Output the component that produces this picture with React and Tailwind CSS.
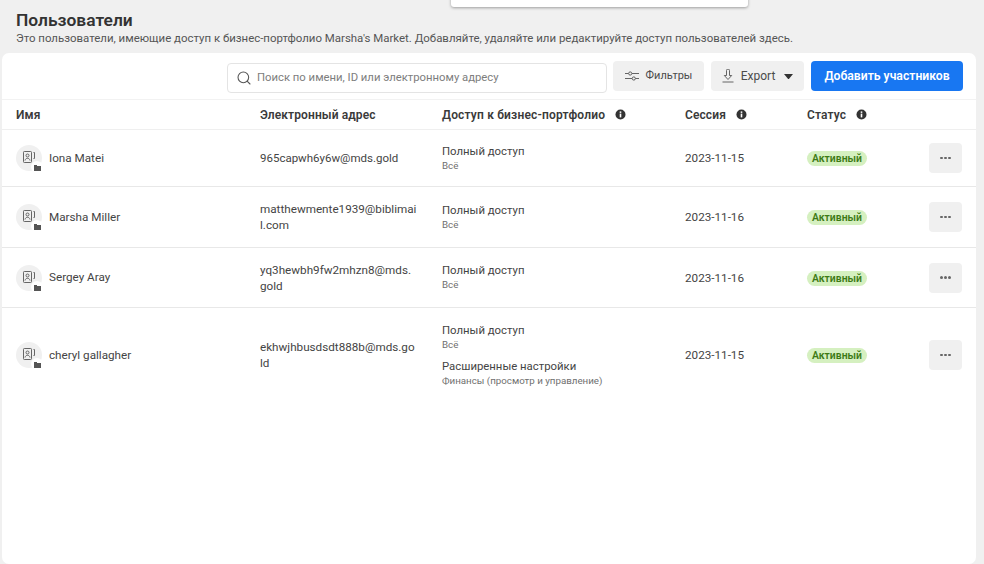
import React from "react";
import { Search } from "lucide-react";

const USERS = [
  { name: "Iona Matei", email: ["965capwh6y6w@mds.gold"], date: "2023-11-15", h: "h-[57px]", mail: "text-[11.5px]" },
  { name: "Marsha Miller", email: ["matthewmente1939@biblimai", "l.com"], date: "2023-11-16", h: "h-[61px]", mail: "text-[11.7px]" },
  { name: "Sergey Aray", email: ["yq3hewbh9fw2mhzn8@mds.", "gold"], date: "2023-11-16", h: "h-[60px]", mail: "text-[11.7px]" },
  { name: "cheryl gallagher", email: ["ekhwjhbusdsdt888b@mds.go", "ld"], date: "2023-11-15", h: "h-[94px]", mail: "text-[11.7px]", extra: true },
];

const COLS = "grid grid-cols-[244px_182px_243px_122px_122px_1fr] pl-[14px] pr-[14px] items-center";

function Info() {
  return (
    <svg width="11" height="11" viewBox="0 0 11 11" className="ml-[10px] shrink-0">
      <circle cx="5.5" cy="5.5" r="5" fill="#333" />
      <rect x="4.7" y="4.6" width="1.6" height="3.8" fill="#fff" />
      <rect x="4.7" y="2.4" width="1.6" height="1.5" fill="#fff" />
    </svg>
  );
}

function Avatar() {
  return (
    <div className="relative w-[26px] h-[26px] rounded-full bg-[#f0f0f0] flex items-center justify-center shrink-0">
      <svg width="14" height="14" viewBox="0 0 14 14" fill="none" stroke="#666" strokeWidth="1" className="-mt-[2px] -ml-[1px]">
        <rect x="1.5" y="1.5" width="8" height="11" rx="0.8" />
        <circle cx="5.5" cy="5.5" r="1.5" />
        <path d="M3 10.5c.4-1.6 1.3-2.2 2.5-2.2s2.1.6 2.5 2.2" />
        <path d="M11.5 2.5h1v6h-1" />
      </svg>
      <div className="absolute -right-[1px] -bottom-[2px] w-[12px] h-[12px] rounded-full bg-white flex items-center justify-center">
        <svg width="7" height="7" viewBox="0 0 7 7" className="mt-[1px] ml-[1px]">
          <path d="M0 1h3v1h4v5H0z" fill="#555" />
        </svg>
      </div>
    </div>
  );
}

function Access({ title, sub }) {
  return (
    <div>
      <div className="text-[11.35px] leading-[15px] text-[#444]">{title}</div>
      <div className="text-[9.75px] leading-[14px] text-[#6f6f6f]">{sub}</div>
    </div>
  );
}

export default function App() {
  return (
    <div className="relative h-[564px] w-[984px] overflow-hidden bg-[#f0f0f0] font-['Roboto',sans-serif]">
      {/* popup edge at the top */}
      <div className="absolute left-[451px] -top-[10px] w-[297px] h-[17px] bg-white rounded-[3px] shadow-[0_1px_3px_rgba(0,0,0,0.35)]" />

      <div className="pl-[16px] pt-[12px] h-[53px]">
        <h1 className="text-[17.4px] leading-[17px] font-semibold text-[#333]">Пользователи</h1>
        <p className="text-[11.44px] leading-[14px] mt-[2px] text-[#555] whitespace-nowrap">
          Это пользователи, имеющие доступ к бизнес-портфолио Marsha's Market. Добавляйте, удаляйте или редактируйте доступ пользователей здесь.
        </p>
      </div>

      <div className="ml-[2px] w-[974px] h-[511px] bg-white rounded-[7px]">
        {/* toolbar */}
        <div className="h-[47px] flex items-center justify-end pr-[13px] border-b border-[#f2f2f2]">
          <div className="w-[380px] h-[30px] mt-[3px] mr-[6px] border border-[#e4e4e4] rounded-[4px] flex items-center pl-[8px]">
            <Search size={16} color="#555" strokeWidth={1.6} />
            <span className="ml-[5px] pt-[2px] text-[11.3px] text-[#7d7d7d]">Поиск по имени, ID или электронному адресу</span>
          </div>
          <button className="h-[30px] w-[91px] mr-[7px] rounded-[4px] bg-[#f0f0f0] flex items-center justify-center gap-[7px] text-[11px] text-[#4b4b4b]">
            <svg width="14" height="10" viewBox="0 0 14 10" fill="none" stroke="#555" strokeWidth="0.9">
              <path d="M0 2.5h3.5M7 2.5h7M0 7.5h7M10.5 7.5H14" />
              <circle cx="5.2" cy="2.5" r="1.6" />
              <circle cx="8.8" cy="7.5" r="1.6" />
            </svg>
            <span className="pt-[1px]">Фильтры</span>
          </button>
          <button className="h-[30px] w-[93px] mr-[7px] rounded-[4px] bg-[#f0f0f0] flex items-center justify-center text-[12px] text-[#4b4b4b]">
            <svg width="12" height="14" viewBox="0 0 12 14" fill="none" stroke="#555" strokeWidth="0.9" className="mr-[7px]">
              <path d="M4.5 1.5a1.5 1.5 0 0 1 3 0v5h2.2L6 10.5 2.3 6.5h2.2z" />
              <path d="M0.5 13h11" />
            </svg>
            Export
            <svg width="9" height="5" viewBox="0 0 9 5" className="ml-[9px]"><path d="M0 0h9L5.3 4.6a1 1 0 0 1-1.6 0z" fill="#333" /></svg>
          </button>
          <button className="h-[30px] w-[152px] rounded-[4px] bg-[#1877f2] text-white text-[12.2px] font-semibold">Добавить участников</button>
        </div>

        {/* header */}
        <div className={`${COLS} h-[30px] border-b border-[#efefef] text-[12px] font-semibold text-[#3a3a3a] tracking-[0.1px]`}>
          <div>Имя</div>
          <div>Электронный адрес</div>
          <div className="flex items-center tracking-[0.18px]">Доступ к бизнес-портфолио<Info /></div>
          <div className="flex items-center">Сессия<Info /></div>
          <div className="flex items-center">Статус<Info /></div>
          <div />
        </div>

        {USERS.map((u, i) => (
          <div key={u.name} className={`${COLS} ${u.h} ${i < 3 ? "border-b border-[#e8e8e8]" : ""} text-[11.7px] text-[#444]`}>
            <div className="flex items-center gap-[7px]">
              <Avatar />
              <span className="pt-[1px]">{u.name}</span>
            </div>
            <div className={`leading-[16px] whitespace-nowrap ${u.mail}`}>
              {u.email.map((line) => (
                <div key={line}>{line}</div>
              ))}
            </div>
            <div>
              <Access title="Полный доступ" sub="Всё" />
              {u.extra && (
                <div className="mt-[7px]">
                  <Access title="Расширенные настройки" sub="Финансы (просмотр и управление)" />
                </div>
              )}
            </div>
            <div className="mt-[2px]">{u.date}</div>
            <div className="mt-[2px]">
              <span className="inline-block h-[15px] px-[5px] rounded-full bg-[#d5f0c0] text-[#3d7a14] text-[10.4px] leading-[15px] font-semibold">Активный</span>
            </div>
            <div className="flex justify-end">
              <button className="w-[33px] h-[30px] rounded-[4px] bg-[#f0f0f0] flex items-center justify-center gap-[1.5px]">
                <span className="w-[2.5px] h-[2.5px] rounded-full bg-[#666]" />
                <span className="w-[2.5px] h-[2.5px] rounded-full bg-[#666]" />
                <span className="w-[2.5px] h-[2.5px] rounded-full bg-[#666]" />
              </button>
            </div>
          </div>
        ))}
      </div>
    </div>
  );
}
